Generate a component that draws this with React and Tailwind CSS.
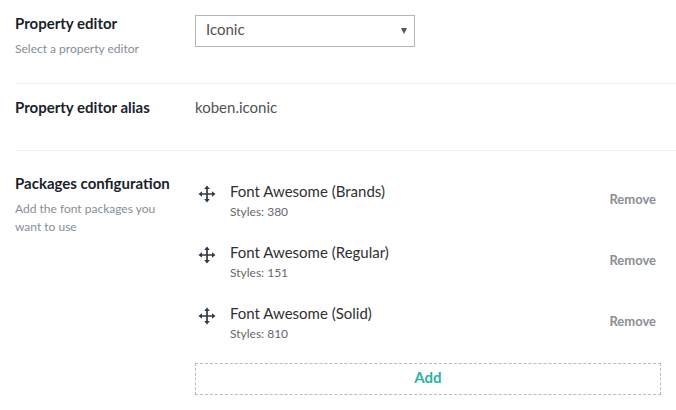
const packages = [
  { name: "Font Awesome (Brands)", styles: 380 },
  { name: "Font Awesome (Regular)", styles: 151 },
  { name: "Font Awesome (Solid)", styles: 810 },
];

function MoveIcon() {
  return (
    <svg width="18" height="18" viewBox="0 0 18 18" className="text-[#303a45]">
      <path d="M9 2v14M2 9h14" stroke="currentColor" strokeWidth="1.7" fill="none" />
      <path d="M9 0.5 11.8 4H6.2zM9 17.5 6.2 14h5.6zM0.5 9 4 6.2v5.6zM17.5 9 14 11.8V6.2z" fill="currentColor" />
    </svg>
  );
}

function Label({ title, hint }) {
  return (
    <div className="w-[180px] shrink-0">
      <div className="text-[15px] leading-[20px] font-bold text-[#1a1f2b]">{title}</div>
      {hint && <div className="mt-[7px] text-[12px] leading-[18px] text-[#868e96] w-[150px]">{hint}</div>}
    </div>
  );
}

export default function App() {
  return (
    <div className="w-[676px] h-[410px] bg-white overflow-hidden pl-[15px] font-['Lato','Open_Sans',sans-serif]">
      <div className="flex h-[84px] pt-[13px] border-b border-[#f0f0f0]">
        <Label title="Property editor" hint="Select a property editor" />
        <div className="w-[220px] h-[32px] mt-[2px] border border-[#b5b5b5] flex items-center justify-between pl-[10px] pr-[7px] text-[15px] text-[#515054]">
          <span className="-mt-[4px]">Iconic</span>
          <span className="w-0 h-0 border-l-[3px] border-r-[3px] border-t-[6px] border-l-transparent border-r-transparent border-t-[#555]" />
        </div>
      </div>

      <div className="flex h-[67px] pt-[13px] border-b border-[#f0f0f0]">
        <Label title="Property editor alias" />
        <div className="text-[15px] leading-[20px] text-[#515054]">koben.iconic</div>
      </div>

      <div className="flex pt-[22px]">
        <Label title="Packages configuration" hint="Add the font packages you want to use" />
        <div className="w-[466px]">
          <div className="flex flex-col">
            {packages.map((p) => (
              <div key={p.name} className="flex items-center h-[61px]">
                <div className="w-[35px] pl-[3px] -mt-[20px] flex">
                  <MoveIcon />
                </div>
                <div className="flex-1 -mt-[5px]">
                  <div className="text-[15px] leading-[20px] text-[#303033]">{p.name}</div>
                  <div className="mt-[2px] text-[12px] leading-[18px] text-[#68676b]">Styles: {p.styles}</div>
                </div>
                <button className="pr-[5px] -mt-[8px] text-[13px] font-bold text-[#8a8e94]">Remove</button>
              </div>
            ))}
          </div>
          <button className="mt-[7px] w-full h-[32px] pb-[4px] border border-dashed border-[#bbbabf] text-[15px] font-bold text-[#2bb1a5]">
            Add
          </button>
        </div>
      </div>
    </div>
  );
}
